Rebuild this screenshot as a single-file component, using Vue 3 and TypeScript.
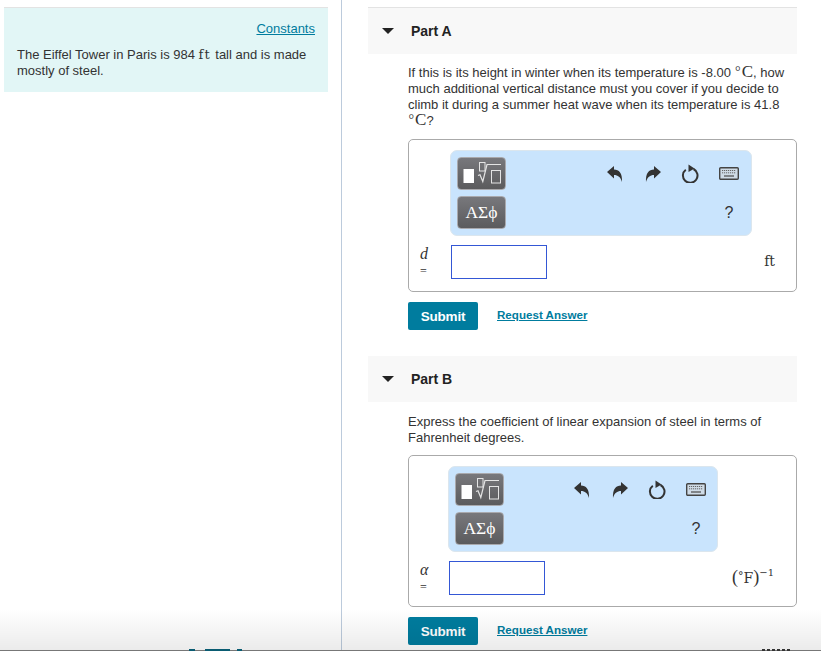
<script setup lang="ts">
interface Part {
  key: string
  title: string
  variable: string
  shifted: boolean
}
const parts: Part[] = [
  { key: 'a', title: 'Part A', variable: 'd', shifted: false },
  { key: 'b', title: 'Part B', variable: 'α', shifted: true },
]
</script>

<template>
  <div class="page">
    <aside class="left">
      <div class="intro">
        <p class="constants"><a class="link">Constants</a></p>
        <p class="intro-text">The Eiffel Tower in Paris is 984 <span class="math">ft</span> tall and is made mostly of steel.</p>
      </div>
    </aside>
    <main class="right">
      <section v-for="part in parts" :key="part.key" class="part" :class="{ shifted: part.shifted }">
        <header class="part-head">
          <span class="caret"></span>
          <h2>{{ part.title }}</h2>
        </header>
        <div class="body">
          <p v-if="part.key === 'a'" class="question">If this is its height in winter when its temperature is -8.00 <span class="deg">°</span><span class="bigmath">C</span>, how much additional vertical distance must you cover if you decide to climb it during a summer heat wave when its temperature is 41.8 <span class="deg">°</span><span class="bigmath">C</span>?</p>
          <p v-else class="question">Express the coefficient of linear expansion of steel in terms of Fahrenheit degrees.</p>
          <div class="answer">
            <div class="toolbar">
              <div class="tool-buttons">
                <button class="tool">
                  <svg width="47" height="31" viewBox="0 0 47 31">
                    <rect x="5.500" y="11" width="10.500" height="14" fill="#fff" />
                    <rect x="21.500" y="4.500" width="5.500" height="8.500" fill="none" stroke="#e4e4e4" stroke-width="1" />
                    <path d="M20 17.500l2-.8 2.800 6.800L29 6.500h14" fill="none" stroke="#e4e4e4" stroke-width="1.200" />
                    <rect x="33.500" y="12.500" width="9" height="12.500" fill="none" stroke="#e4e4e4" stroke-width="1" />
                  </svg>
                </button>
                <button class="tool greek">ΑΣϕ</button>
              </div>
              <div class="tool-icons">
                <svg width="16" height="16" viewBox="0 0 16 16"><path d="M0 6L7 0v3.500C12 3.500 15.500 7 15 16 13.500 11 11 9 7 9v3.500z" fill="#333" /></svg>
                <svg width="16" height="16" viewBox="0 0 16 16"><path d="M16 6L9 0v3.500C4 3.500 .5 7 1 16 2.500 11 5 9 9 9v3.500z" fill="#333" /></svg>
                <svg width="18" height="19" viewBox="0 0 18 19"><path d="M4.800 5.700A7.300 7.300 0 1 0 12.500 5" fill="none" stroke="#333" stroke-width="2" /><path d="M7.500 .5l6 4-6 3.500z" fill="#333" /></svg>
                <svg width="20" height="13" viewBox="0 0 20 13"><rect x=".7" y=".7" width="18.600" height="11.600" rx="1" fill="#cfdbe6" stroke="#444" stroke-width="1.400" /><path d="M3 3.500h14M3 5.800h14" stroke="#666" stroke-dasharray="1.200 .8" /><path d="M5 9h10" stroke="#555" stroke-width="1.300" /></svg>
                <span class="spacer"></span><span class="spacer"></span><span class="spacer"></span>
                <span class="help">?</span>
              </div>
            </div>
            <div class="entry">
              <div class="var"><i>{{ part.variable }}</i><span class="eq">=</span></div>
              <div class="input"></div>
              <div v-if="part.key === 'a'" class="unit">ft</div>
              <div v-else class="unit unit-b"><span class="paren">(</span><span class="deg-f">°</span>F<span class="paren">)</span><sup>−1</sup></div>
            </div>
          </div>
          <div class="actions">
            <button class="submit">Submit</button>
            <a class="request">Request Answer</a>
          </div>
        </div>
      </section>
    </main>
    <div class="fade"></div>
    <span class="clip clip-a"></span>
    <span class="clip clip-b"></span>
  </div>
</template>

<style>
html, body { margin: 0; background: #fff; }
</style>

<style scoped>
.page {
  position: relative;
  display: flex;
  width: 821px;
  height: 651px;
  overflow: hidden;
  font-family: "Liberation Sans", Arial, sans-serif;
  font-size: 13px;
  line-height: 16px;
  color: #333;
  background: #fff;
}
p, h2 { margin: 0; }
.left {
  box-sizing: border-box;
  width: 342px;
  flex: none;
  padding: 7px 0 0 4px;
  border-right: 1px solid #bccbdc;
}
.intro {
  box-sizing: border-box;
  width: 324px;
  height: 85px;
  padding: 13px 13px 0;
  background: #e2f6f6;
  border-top: 1px solid #e3e3e3;
}
.constants { text-align: right; margin-bottom: 10px; }
.link { color: #007c9e; text-decoration: underline; font-size: 13px; }
.math {
  font-family: "DejaVu Serif", serif;
  font-size: 13px;
  line-height: 0;
  letter-spacing: 1px;
  margin-right: 1px;
}
.right { width: 429px; margin-left: 26px; padding-top: 7px; }
.part { margin-bottom: 26px; }
.part-head {
  display: flex;
  align-items: center;
  box-sizing: border-box;
  height: 47px;
  padding-left: 14px;
  background: #f8f8f8;
  border-top: 1px solid #e3e3e3;
}
.shifted .part-head { height: 46px; border-top: 0; padding-bottom: 1px; }
.caret {
  width: 0;
  height: 0;
  border-left: 6px solid transparent;
  border-right: 6px solid transparent;
  border-top: 6px solid #222;
}
h2 { margin-left: 17px; font-size: 14px; font-weight: 700; color: #222; }
.body { padding-top: 11px; }
.shifted .body { padding-top: 12px; }
.question { margin-left: 40px; width: 385px; }
.answer {
  box-sizing: border-box;
  width: 389px;
  height: 153px;
  margin: 10px 0 0 40px;
  padding: 10px 0 0;
  border: 1px solid #aaa;
  border-radius: 5px;
}
.shifted .answer { height: 152px; margin-top: 9px; }
.toolbar {
  box-sizing: border-box;
  display: flex;
  justify-content: space-between;
  width: 302px;
  height: 86px;
  margin-left: 41px;
  padding: 6px 4px 6px 6px;
  background: #c9e4fd;
  border: 1px solid #dbe6ee;
  border-radius: 7px;
}
.shifted .toolbar { width: 270px; margin-left: 39px; padding-right: 3px; }
.tool-buttons { display: flex; flex-direction: column; gap: 6px; }
.tool {
  display: flex;
  align-items: center;
  justify-content: center;
  width: 49px;
  height: 33px;
  padding: 0;
  border: 1px solid #a9a9ad;
  border-radius: 4px;
  background: linear-gradient(#78787c, #5b5b5d);
}
.greek { color: #fff; font-family: "Liberation Serif", serif; font-size: 17.500px; font-weight: 400; }
.tool-icons {
  display: grid;
  grid-template-columns: 44px 32px 42px 36px;
  grid-template-rows: 33px 33px;
  row-gap: 6px;
  align-items: center;
  justify-items: center;
}
.help { font-size: 16px; color: #333; }
.entry { display: flex; align-items: center; margin-top: 9px; height: 34px; }
.var {
  display: flex;
  flex-direction: column;
  align-items: flex-start;
  box-sizing: border-box;
  width: 42px;
  padding-left: 11px;
  font-family: "Liberation Serif", serif;
  font-size: 16px;
  line-height: 16px;
}
.eq { font-size: 12px; padding-top: 1px; }
.shifted .var { width: 40px; }
.input {
  box-sizing: border-box;
  width: 96px;
  height: 34px;
  border: 1px solid #3457d5;
}
.unit {
  margin-left: auto;
  padding: 0 21px 2px 0;
  font-family: "DejaVu Serif", serif;
  font-size: 14px;
}
.unit-b { padding: 0 22px 2px 0; line-height: 18px; color: #333; }
.paren { font-family: "Liberation Serif", serif; font-size: 18px; }
.unit-b sup { font-size: 10px; line-height: 0; vertical-align: 7px; }
.deg-f { font-size: 11px; vertical-align: 3px; line-height: 0; }
.deg {
  font-family: "Liberation Serif", serif;
  font-size: 14px;
  line-height: 0;
  vertical-align: 1px;
  margin: 0 1px 0 .5px;
}
.bigmath { font-family: "Liberation Serif", serif; font-size: 17px; line-height: 0; }
.actions { display: flex; align-items: center; margin: 10px 0 0 40px; }
.submit {
  width: 70px;
  height: 28px;
  padding: 0;
  border: 0;
  border-radius: 2px;
  background: #007c9e;
  color: #fff;
  font-family: "Liberation Sans", Arial, sans-serif;
  font-size: 13.500px;
  font-weight: 700;
  letter-spacing: -.2px;
}
.request {
  margin-left: 19px;
  padding-bottom: 2px;
  color: #007c9e;
  font-size: 11.600px;
  font-weight: 700;
  text-decoration: underline;
}
.fade {
  position: absolute;
  left: 0;
  right: 0;
  bottom: 0;
  height: 42px;
  box-sizing: border-box;
  pointer-events: none;
  background: linear-gradient(rgba(0, 0, 0, 0), rgba(0, 0, 0, .08));
  border-bottom: 1px solid #777;
}
.clip {
  position: absolute;
  bottom: 0;
  height: 2px;
  background: repeating-linear-gradient(90deg, #333 0 3px, transparent 3px 5px);
}
.clip-a { left: 189px; width: 53px; background: linear-gradient(90deg, #0a5c72 0 6px, transparent 6px 16px, #0a5c72 16px 41px, transparent 41px 48px, #0a5c72 48px); }
.clip-b { left: 762px; width: 28px; }
</style>
